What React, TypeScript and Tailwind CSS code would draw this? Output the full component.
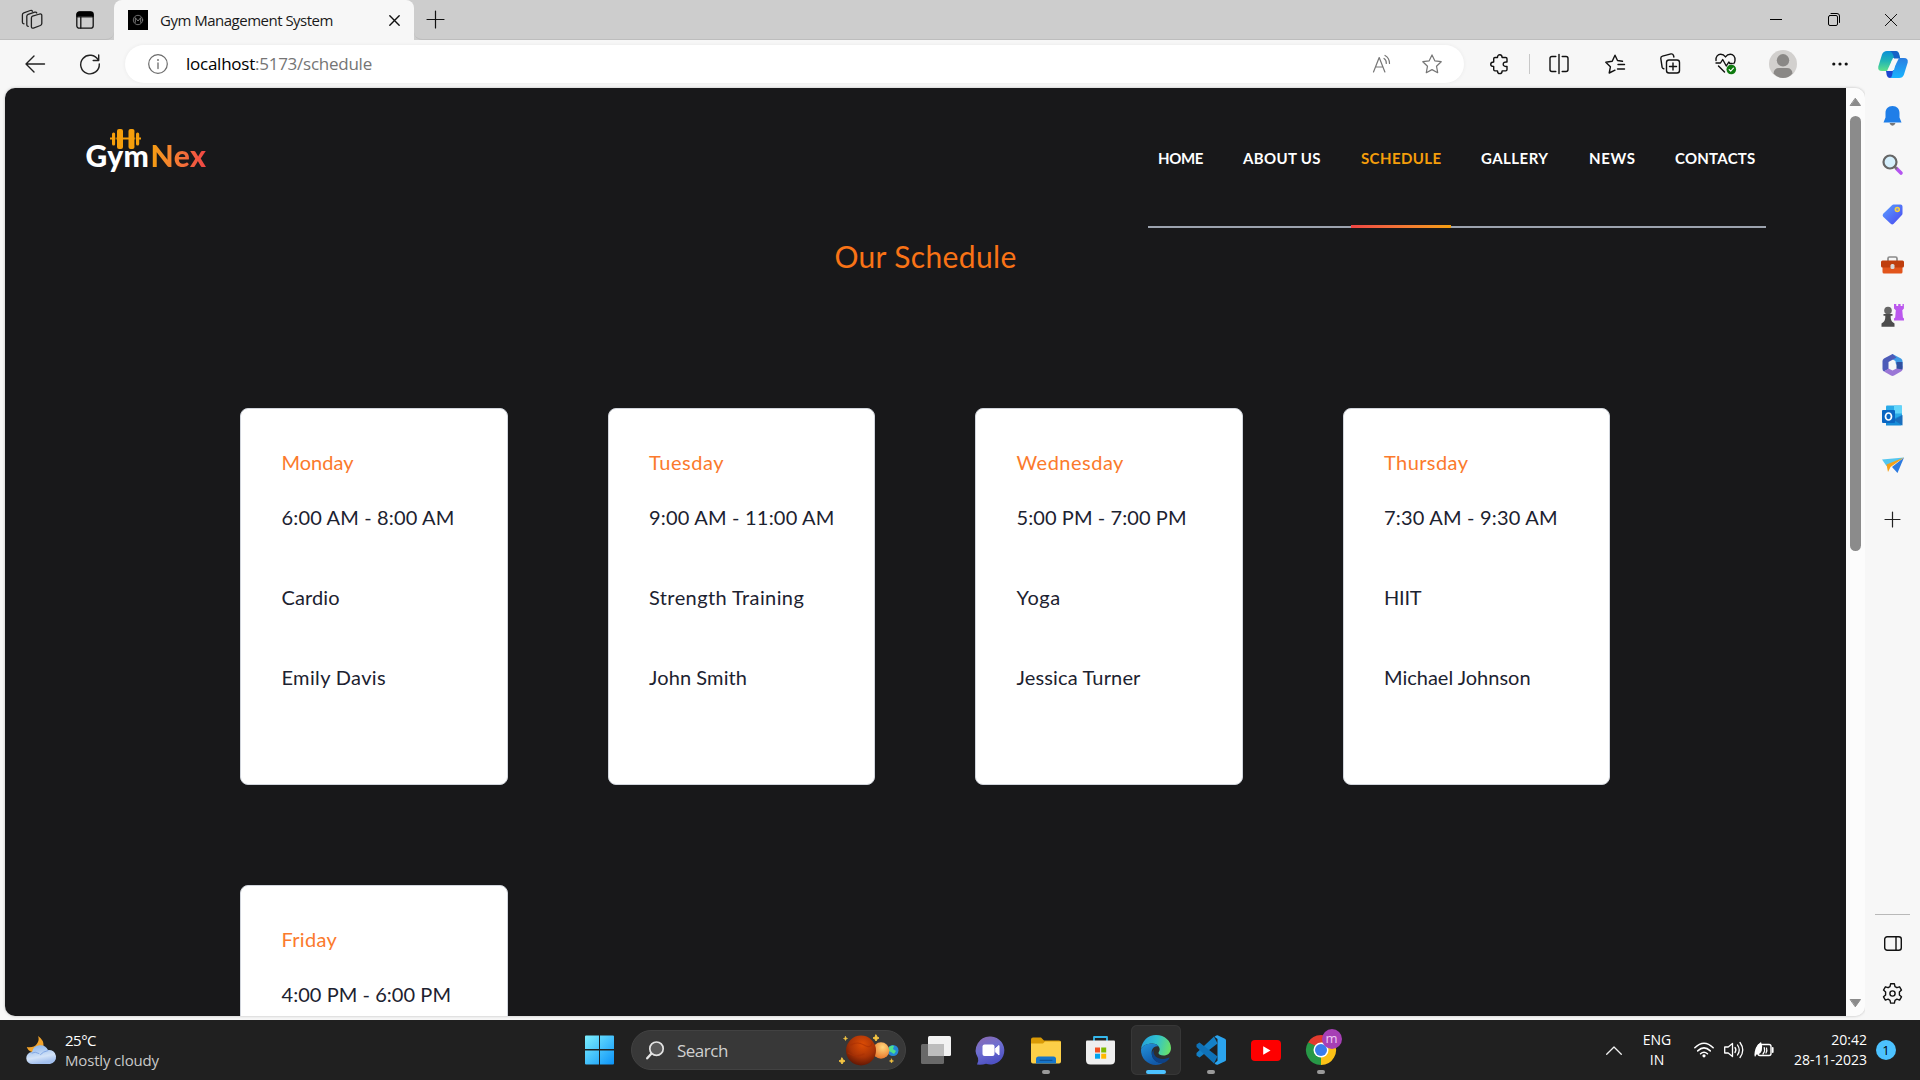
import type { ReactNode } from "react";

type IconProps = { w: number; h: number; children: ReactNode; className?: string };

function Icon({ w, h, children, className = "" }: IconProps) {
  return (
    <svg
      width={w}
      height={h}
      viewBox={`0 0 ${w} ${h}`}
      fill="none"
      strokeLinecap="round"
      strokeLinejoin="round"
      className={`shrink-0 overflow-visible ${className}`}
    >
      {children}
    </svg>
  );
}

function Cell({ className, children }: { className: string; children: ReactNode }) {
  return <div className={`flex shrink-0 items-center justify-center ${className}`}>{children}</div>;
}

/* ---------- Browser chrome ---------- */

function TabBar() {
  return (
    <div className="flex h-10 shrink-0 bg-[#cdcdcd]">
      <div className="flex w-[114px] items-center rounded-br-lg border-b border-[#bdbdbd]">
        <Cell className="ml-[12px] w-10">
          <Icon w={22} h={22}>
            <g stroke="#222" strokeWidth="1.3">
              <path d="M11.5 7.2l7.3-2.2c1.4-.3 2 .4 2 1.4v8.2c0 1-.5 1.6-1.4 1.9l-7 2.6c-1.1.4-2-.3-2-1.3V9c0-1 .3-1.5 1.1-1.8z" />
              <path d="M7.3 17.3c-1 0-1.5-.7-1.5-1.6V7.3c0-1 .5-1.6 1.4-1.9l6.5-2.2c1-.3 1.8 0 2.1.8" />
              <path d="M3 14.8c-1-.1-1.6-.7-1.6-1.6V5.700c0-1 .5-1.6 1.4-1.900L9.300 1.500c1-.3 1.800 0 2.200.7" />
            </g>
          </Icon>
        </Cell>
        <Cell className="ml-[13px] w-10">
          <Icon w={18} h={18}>
            <rect x="0.8" y="1" width="16.400" height="16.200" rx="2.500" stroke="#111" strokeWidth="1.300" />
            <path d="M1 5.500V3.500Q1 1 3.500 1h11Q17 1 17 3.500v2z" fill="#000" stroke="#000" />
            <path d="M4.800 6v11" stroke="#111" strokeWidth="1.300" />
          </Icon>
        </Cell>
      </div>
      <div className="flex w-[300px] items-center rounded-t-lg bg-[#f7f7f7] pl-[14px]">
        <Icon w={20} h={20}>
          <path d="M0 0h20v20H0z" fill="#000" />
          <circle cx="10" cy="10" r="4.700" stroke="#888" strokeWidth="0.800" />
          <path d="M7.300 12.300V7.700L10 11l2.700-3.300v4.600" stroke="#999" strokeWidth="0.800" />
        </Icon>
        <span className="mb-px ml-3 w-[206px] whitespace-nowrap font-['Open_Sans',sans-serif] text-[15px] leading-5 tracking-[-0.5px] text-[#1a1a1a]">
          Gym Management System
        </span>
        <Cell className="ml-[18px] w-5">
          <Icon w={11} h={11}>
            <path d="M0.800 0.800l9.400 9.400M10.200 0.800l-9.400 9.400" stroke="#111" strokeWidth="1.400" />
          </Icon>
        </Cell>
      </div>
      <div className="flex flex-1 items-center rounded-bl-lg border-b border-[#bdbdbd]">
        <Cell className="ml-[3px] w-[37px]">
          <Icon w={17} h={17}>
            <path d="M8.500 0v17M0 8.500h17" stroke="#111" strokeWidth="1.200" />
          </Icon>
        </Cell>
        <Cell className="ml-auto w-[58px]">
          <Icon w={12} h={12}>
            <path d="M0 5.500h12" stroke="#000" strokeLinecap="butt" />
          </Icon>
        </Cell>
        <Cell className="w-[57px]">
          <Icon w={12} h={13}>
            <rect x="0.500" y="2.500" width="9" height="10" rx="1.500" stroke="#000" />
            <path d="M3 0.500h6q2.500 0 2.500 2.500v6.500" stroke="#000" />
          </Icon>
        </Cell>
        <Cell className="w-[58px]">
          <Icon w={12} h={12}>
            <path d="M0.300 0.300l11.400 11.400M11.700 0.300l-11.400 11.400" stroke="#111" />
          </Icon>
        </Cell>
      </div>
    </div>
  );
}

function Toolbar() {
  return (
    <div className="flex h-12 shrink-0 items-center bg-[#f7f7f7] pb-px">
      <Cell className="ml-[10px] w-[50px]">
        <Icon w={20} h={18}>
          <path d="M19.500 9H1M9 1L1 9l8 8" stroke="#222" strokeWidth="1.400" />
        </Icon>
      </Cell>
      <Cell className="ml-[5px] w-[50px]">
        <Icon w={20} h={20}>
          <path d="M18.300 6.300A9.300 9.300 0 1 0 19.300 10" stroke="#222" strokeWidth="1.400" />
          <path d="M18.700 1v5.500h-5.500" stroke="#222" strokeWidth="1.400" />
        </Icon>
      </Cell>
      <div className="ml-[10px] flex h-[38px] w-[1339px] items-center rounded-full bg-white shadow-[0_0_4px_rgba(0,0,0,0.06)]">
        <Icon w={20} h={20} className="ml-[22.500px]">
          <circle cx="10" cy="10" r="9.300" stroke="#6b6b6b" strokeWidth="1.200" />
          <path d="M10 9v5.500" stroke="#6b6b6b" strokeWidth="1.300" />
          <circle cx="10" cy="6" r="0.900" fill="#6b6b6b" />
        </Icon>
        <span className="ml-[18.500px] whitespace-nowrap font-['Open_Sans',sans-serif] text-[17px] leading-6 tracking-[-0.25px] text-[#757575]">
          <span className="text-black">localhost</span>:5173/schedule
        </span>
        <Cell className="ml-auto w-[50px]">
          <Icon w={20} h={20}>
            <g stroke="#767676" strokeWidth="1.200">
              <path d="M1.500 18L7.200 3.500 12.900 18M3.500 13h7.400" />
              <path d="M12 4.500q2.500 1.500 2.300 5" />
              <path d="M13 1.500q4.500 2.500 4.500 8" />
            </g>
          </Icon>
        </Cell>
        <Cell className="mr-[7px] w-[50px]">
          <Icon w={20} h={20}>
            <path
              d="M10 0.900l2.800 5.900 6.400.9-4.700 4.500 1.200 6.500-5.700-3.100-5.700 3.100 1.200-6.500L.8 7.700l6.400-.9z"
              stroke="#767676"
              strokeWidth="1.200"
            />
          </Icon>
        </Cell>
      </div>
      <Cell className="ml-[11px] w-[50px]">
        <Icon w={20} h={20}>
          <path
            d="M5 3.500h2.500C7.500 1.500 8.500.7 9.800.7s2.300.8 2.300 2.800h3.600q1.300 0 1.300 1.300v3.200c-2.300-.3-3.800.6-3.800 2.200s1.500 2.500 3.800 2.200v3.200q0 1.300-1.300 1.300h-3.600c0 2-1 2.700-2.300 2.700s-2.300-.7-2.300-2.700H5q-1.300 0-1.300-1.300v-3.200C1.700 12.400.7 11.500.7 10.200S1.700 8 3.700 8V4.800Q3.700 3.500 5 3.500z"
            stroke="#111"
            strokeWidth="1.400"
          />
        </Icon>
      </Cell>
      <Cell className="-ml-px w-[10px]">
        <div className="h-5 w-px bg-[#c8c8c8]" />
      </Cell>
      <Cell className="w-[50px]">
        <Icon w={20} h={20}>
          <g stroke="#111" strokeWidth="1.400">
            <path d="M10 0.500v19" />
            <path d="M6.800 2.500H3q-2 0-2 2v11q0 2 2 2h3.800" />
            <path d="M13.200 2.500H17q2 0 2 2v11q0 2-2 2h-3.800" />
          </g>
        </Icon>
      </Cell>
      <Cell className="ml-[6px] w-[50px]">
        <Icon w={20} h={20}>
          <g stroke="#111" strokeWidth="1.400">
            <path d="M10 16.200L4.200 19l1.200-6.200L.8 8.200l6.400-.9L10 1.200l2.500 5.300 5 .8" />
            <path d="M13 10.500h6.500M12.500 15h7" />
          </g>
        </Icon>
      </Cell>
      <Cell className="ml-[5px] w-[50px]">
        <Icon w={20} h={21}>
          <g stroke="#111" strokeWidth="1.400">
            <rect x="6.500" y="7" width="13" height="13" rx="2.500" />
            <path d="M13 10v7M9.500 13.500h7" />
            <path d="M3.800 15.800q-1.300-.3-1.700-1.600L.8 5.500Q.7 3.700 2.500 3.200L11 .9q1.800-.3 2.400 1.300l.5 1.800" />
          </g>
        </Icon>
      </Cell>
      <Cell className="ml-[5px] w-[50px]">
        <Icon w={21} h={21}>
          <g stroke="#111" strokeWidth="1.400">
            <path d="M1 7.500C.5 3.500 3 1.200 5.700 1.200c2.200 0 3.600 1 4.800 2.700 1.200-1.700 2.600-2.700 4.800-2.700C18 1.200 20.500 3.500 20 7.500q-.2 2-1.200 3" />
            <path d="M3.500 13l6 6" />
            <path d="M1 10h4.500l2.200-3.500 3.600 6.500 2.500-4 1 1.500h2.500" />
          </g>
          <circle cx="16.300" cy="16.500" r="4.800" fill="#0f7b10" />
          <path d="M14.200 16.600l1.500 1.500 2.700-2.900" stroke="#fff" strokeWidth="1.200" />
        </Icon>
      </Cell>
      <Cell className="ml-[8px] w-[50px]">
        <Icon w={28} h={28}>
          <circle cx="14" cy="14" r="14" fill="#d2d0ce" />
          <circle cx="14" cy="10.300" r="6.200" fill="#8a8886" />
          <path d="M4.500 23.500Q5 18 10 18h8q5 0 5.500 5.500Q19.500 28 14 28t-9.500-4.500z" fill="#8a8886" />
        </Icon>
      </Cell>
      <Cell className="ml-[7px] w-[50px]">
        <Icon w={16} h={4}>
          <g fill="#111">
            <circle cx="1.800" cy="2" r="1.600" />
            <circle cx="8" cy="2" r="1.600" />
            <circle cx="14.200" cy="2" r="1.600" />
          </g>
        </Icon>
      </Cell>
      <Cell className="ml-[3px] w-[50px]">
        <Icon w={30} h={28}>
          <defs>
            <linearGradient id="copA" x1="0" y1="0" x2="0" y2="1">
              <stop offset="0" stopColor="#0a8fd8" />
              <stop offset="0.500" stopColor="#21b5b5" />
              <stop offset="1" stopColor="#5fe08a" />
            </linearGradient>
            <linearGradient id="copB" x1="0" y1="0" x2="0" y2="1">
              <stop offset="0" stopColor="#2b7de0" />
              <stop offset="1" stopColor="#18b4ff" />
            </linearGradient>
          </defs>
          <path d="M9 1h9q2.300 0 3 2.500l1 4.500h-7L9 21H4q-4.500 0-3.700-4.500L4 4.500Q5.300 1 9 1z" fill="url(#copA)" />
          <path d="M17 1q3.300 0 4 3l1.200 4.500H16Q15.500 3 12 1z" fill="#1663c7" />
          <path d="M21 8h5q4.500 0 3.700 4.500L26 24.500Q24.700 28 21 28h-8.500L15 20z" fill="url(#copB)" />
          <path d="M8 21h7l-1 4.500q-.7 2.500-2 2.500-2.500 0-3.300-3z" fill="#1b46d0" />
          <path d="M14 10h4.500L16 20h-4.500z" fill="#f7f7f7" />
        </Icon>
      </Cell>
    </div>
  );
}

function Sidebar() {
  return (
    <aside className="flex w-[55px] shrink-0 flex-col items-center bg-[#f7f7f7]">
      <Cell className="mt-[3px] h-[49px]">
        <Icon w={19} h={20}>
          <path d="M6.500 17h6q-1 2.800-3 2.800t-3-2.800z" fill="#777" />
          <path d="M9.500 0C5 0 2.500 3 2.500 7v4.500L.5 16.500h18l-2-5V7c0-4-2.500-7-7-7z" fill="#1f7ee8" />
        </Icon>
      </Cell>
      <Cell className="-mt-px h-[50px]">
        <Icon w={21} h={21}>
          <path d="M14.500 14.500l4.500 4.500" stroke="#b455f0" strokeWidth="3.600" />
          <path d="M12.800 12.800l1.500 1.500" stroke="#777" strokeWidth="2.400" />
          <circle cx="8" cy="8" r="6.500" fill="#d5effc" stroke="#666" strokeWidth="2.200" />
        </Icon>
      </Cell>
      <Cell className="h-[51px]">
        <Icon w={21} h={21}>
          <defs>
            <linearGradient id="tagFill" x1="0" y1="0" x2="1" y2="1">
              <stop offset="0" stopColor="#5aa2ff" />
              <stop offset="1" stopColor="#4a46f0" />
            </linearGradient>
          </defs>
          <path d="M11.500.5h7q2 0 2 2v7q0 1-.8 1.800l-8 8.500q-1.500 1.200-3 0l-7.500-7q-1.200-1.500 0-3L10 1.200q.7-.7 1.500-.7z" fill="url(#tagFill)" />
          <circle cx="15.300" cy="5.500" r="2" fill="#8b8fd0" stroke="#f6d33c" strokeWidth="1.500" />
        </Icon>
      </Cell>
      <Cell className="h-[50px]">
        <Icon w={23} h={18}>
          <path d="M7 5V2.500Q7 1 8.500 1h6Q16 1 16 2.500V5" stroke="#8a8a8a" strokeWidth="1.700" />
          <rect x="1.500" y="9" width="20" height="8.500" rx="1.500" fill="#e2551c" />
          <rect x="0" y="4.500" width="23" height="7" rx="1.500" fill="#bf3e0d" />
          <rect x="9.500" y="8" width="4" height="5" rx="1.500" fill="#d8d8d8" />
        </Icon>
      </Cell>
      <Cell className="h-[50px]">
        <Icon w={23} h={23}>
          <path d="M13 0h2.300v2h1.900V0h2.400v2h1.900V0h1.400v4.500l-1.600 1.700.6 7.300 1.100 1v2H13v-2l1.200-1 .6-7.300L13 4.500z" fill="#bb58ee" />
          <circle cx="7" cy="6.500" r="3.800" fill="#666" />
          <path d="M2.500 10h9v1.700H9.700q-.2 4.500 1.800 6.300l2 1.500v3.300H.5v-3.300l2-1.500q2-1.800 1.800-6.300H2.500z" fill="#4c4c4c" />
        </Icon>
      </Cell>
      <Cell className="h-[50px]">
        <Icon w={21} h={22}>
          <path d="M10.500 0L19 4.500q1.500 1 1.500 2.500v7l-7-4V7L8 4z" fill="#3f9be6" />
          <path d="M10.500 0L2 4.500Q.5 5.500.5 7v8q0 1.500 1.500 2.500l4.500-2.500V8l8-4.500z" fill="#4d5bb8" />
          <path d="M2 17.500l7 4q1.500.8 3 0l7-4q1.500-1 1.500-2.500v-3l-5-3v5l-5 2.500-4-2z" fill="#9a76d6" />
          <path d="M20.500 8v7.500l-6-1V8z" fill="#31509f" />
          <circle cx="10.500" cy="11" r="3.400" fill="#f7f7f7" />
        </Icon>
      </Cell>
      <Cell className="h-[50px]">
        <Icon w={21} h={21}>
          <rect x="4" y="0.500" width="16" height="19" rx="1" fill="#2aaae8" />
          <path d="M12 0.500h8v8h-8z" fill="#62d5fa" />
          <path d="M4 20.500V17l16-7v9.500q0 1-1 1z" fill="#168cd8" />
          <path d="M20.500 10v10.500L12 15z" fill="#1a6ebd" />
          <rect x="0" y="5" width="13" height="13" rx="1" fill="#0b66c2" />
          <ellipse cx="6.500" cy="11.500" rx="3" ry="3.500" stroke="#fff" strokeWidth="1.700" />
        </Icon>
      </Cell>
      <Cell className="h-[50px]">
        <Icon w={22} h={16}>
          <path d="M0 2.500L22 .5l-11 7L4.500 9z" fill="#54c6ef" />
          <path d="M22 .5L15.500 16l-5.500-6z" fill="#2c7ae0" />
          <path d="M4.500 7.500L22 .5 8.500 10 6 15z" fill="#f5a11a" />
        </Icon>
      </Cell>
      <Cell className="mt-[4px] h-[50px]">
        <Icon w={15} h={15}>
          <path d="M7.500 0v15M0 7.500h15" stroke="#222" strokeWidth="1.200" />
        </Icon>
      </Cell>
      <div className="mt-auto h-px w-[35px] bg-[#b9b9b9]" />
      <Cell className="mt-[3px] h-[50px]">
        <Icon w={18} h={15}>
          <rect x="0.700" y="0.700" width="16.600" height="13.600" rx="2.500" stroke="#111" strokeWidth="1.400" />
          <path d="M12 1v13" stroke="#111" strokeWidth="1.400" />
        </Icon>
      </Cell>
      <Cell className="mb-[2px] h-[50px]">
        <Icon w={21} h={21}>
          <path
            d="M8.600.8h3.800l.6 2.800 1.900 1.100 2.700-.9 1.900 3.300-2.100 1.900v2.900l2.100 1.900-1.900 3.300-2.700-.9-1.900 1.100-.6 2.800H8.600L8 17.300l-1.900-1.100-2.700.9-1.900-3.300 2.100-1.900V9L1.500 7.100l1.900-3.300 2.700.9L8 3.600z"
            stroke="#111"
            strokeWidth="1.400"
          />
          <circle cx="10.500" cy="10.500" r="2.600" stroke="#111" strokeWidth="1.400" />
        </Icon>
      </Cell>
    </aside>
  );
}

function Scrollbar() {
  return (
    <div className="flex w-[19px] shrink-0 flex-col items-center bg-[#fcfcfc]">
      <Icon w={11} h={8} className="mt-[10px]">
        <path d="M5.500 0.500L10.500 7.500H0.500z" fill="#8b8b8b" stroke="#8b8b8b" />
      </Icon>
      <div className="mt-[10px] h-[435px] w-[11px] rounded-full bg-[#8b8b8b]" />
      <Icon w={11} h={8} className="mb-[9px] mt-auto">
        <path d="M5.500 7.500L10.500 0.500H0.500z" fill="#8b8b8b" stroke="#8b8b8b" />
      </Icon>
    </div>
  );
}

/* ---------- GymNex page ---------- */

const navItems = [
  { label: "HOME", style: "w-[65px] tracking-[-0.4px]" },
  { label: "ABOUT US", style: "w-[98px] tracking-[0.35px]" },
  { label: "SCHEDULE", style: "w-[100px] tracking-[0.39px]", active: true },
  { label: "GALLERY", style: "w-[88px] tracking-[0.45px]" },
  { label: "NEWS", style: "w-[66px] tracking-[0.6px]" },
  { label: "CONTACTS", style: "w-[101px] tracking-[0.25px]" },
];

type Line = { text: string; style: string };

const sessions: { day: Line; details: Line[] }[] = [
  {
    day: { text: "Monday", style: "" },
    details: [
      { text: "6:00 AM - 8:00 AM", style: "tracking-[0.15px]" },
      { text: "Cardio", style: "tracking-[0.1px]" },
      { text: "Emily Davis", style: "tracking-[0.35px]" },
    ],
  },
  {
    day: { text: "Tuesday", style: "tracking-[0.55px]" },
    details: [
      { text: "9:00 AM - 11:00 AM", style: "tracking-[0.2px]" },
      { text: "Strength Training", style: "tracking-[0.4px]" },
      { text: "John Smith", style: "tracking-[0.1px]" },
    ],
  },
  {
    day: { text: "Wednesday", style: "tracking-[0.5px]" },
    details: [
      { text: "5:00 PM - 7:00 PM", style: "tracking-[0.08px]" },
      { text: "Yoga", style: "tracking-[0.6px]" },
      { text: "Jessica Turner", style: "tracking-[0.15px]" },
    ],
  },
  {
    day: { text: "Thursday", style: "tracking-[0.42px]" },
    details: [
      { text: "7:30 AM - 9:30 AM", style: "tracking-[0.2px]" },
      { text: "HIIT", style: "tracking-[-0.2px]" },
      { text: "Michael Johnson", style: "" },
    ],
  },
  {
    day: { text: "Friday", style: "tracking-[0.3px]" },
    details: [{ text: "4:00 PM - 6:00 PM", style: "tracking-[0.05px]" }],
  },
];

function Logo() {
  return (
    <div className="ml-[80.500px] mt-[41px] flex flex-col">
      <Icon w={31} h={20} className="-mb-[9px] ml-[24.500px]">
        <g fill="#f59e0b">
          <rect x="0" y="8.500" width="31" height="2" />
          <rect x="2" y="3.500" width="3.200" height="13" rx="1.500" />
          <rect x="7" y="0" width="6" height="20" rx="2" />
          <rect x="18.500" y="0" width="6" height="20" rx="2" />
          <rect x="26" y="3.500" width="3.200" height="13" rx="1.500" />
        </g>
        <path d="M5.900 3v14M25.300 3v14" stroke="#18181a" strokeWidth="0.900" />
      </Icon>
      <div className="relative flex text-[30px] font-black leading-[30px] text-white">
        <span className="w-[65px] tracking-[0.4px]">Gym</span>
        <span className="bg-gradient-to-r from-[#f59e0b] to-[#ef4444] bg-clip-text tracking-[0.4px] text-transparent">Nex</span>
      </div>
    </div>
  );
}

function Header() {
  return (
    <header className="flex h-[140px] shrink-0">
      <Logo />
      <nav className="ml-auto mr-[80px] flex gap-5 self-end border-b-2 border-[#9ca3af]">
        {navItems.map((item) => (
          <a
            key={item.label}
            className={`relative h-[78px] whitespace-nowrap pl-[10px] text-[15px] font-bold leading-[21px] ${item.style} ${
              item.active ? "text-[#f59e0b]" : "text-white"
            }`}
          >
            {item.label}
            {item.active && (
              <span className="absolute -bottom-[2px] left-0 h-[3px] w-full bg-gradient-to-r from-[#ef4444] to-[#f59e0b]" />
            )}
          </a>
        ))}
      </nav>
    </header>
  );
}

function Page() {
  return (
    <main className="flex h-[928px] min-w-0 flex-1 flex-col overflow-hidden bg-[#18181a] font-['Lato',sans-serif]">
      <Header />
      <h1 className="mt-[10px] shrink-0 text-center text-[30px] leading-9 tracking-[0.35px] text-[#f97316]">Our Schedule</h1>
      <div className="ml-[235px] mt-[134px] grid shrink-0 grid-cols-[repeat(4,267.500px)] gap-[100px]">
        {sessions.map(({ day, details }) => (
          <article
            key={day.text}
            className="h-[377px] whitespace-nowrap rounded-lg border border-gray-300 bg-white pl-[40.500px] pt-[39px] text-[20px] leading-7 text-[#1c2230]"
          >
            <h2 className={`mb-[27px] text-[#fb7a2c] ${day.style}`}>{day.text}</h2>
            <div className="flex flex-col gap-[52px]">
              {details.map((line) => (
                <p key={line.text} className={line.style}>
                  {line.text}
                </p>
              ))}
            </div>
          </article>
        ))}
      </div>
    </main>
  );
}

/* ---------- Taskbar ---------- */

function SearchBox() {
  return (
    <div className="ml-[16px] flex h-10 w-[275px] shrink-0 items-center rounded-full border border-[#424242] bg-[#383838]">
      <Icon w={18} h={19} className="ml-[14px]">
        <path d="M5.500 12.500L1.200 17.300" stroke="#e4e4e4" strokeWidth="2.400" />
        <circle cx="10.500" cy="7.700" r="6.700" fill="#5a5a5a" stroke="#e4e4e4" strokeWidth="1.700" />
      </Icon>
      <span className="ml-[13px] mt-px text-[17px] tracking-[-0.5px] text-[#d0d0d0]">Search</span>
      <Icon w={60} h={32} className="ml-auto mr-[6px]">
        <defs>
          <radialGradient id="mars" cx="0.550" cy="0.300" r="0.700">
            <stop offset="0" stopColor="#dd4d05" />
            <stop offset="0.600" stopColor="#a93306" />
            <stop offset="1" stopColor="#641804" />
          </radialGradient>
          <radialGradient id="venus" cx="0.600" cy="0.300" r="0.700">
            <stop offset="0" stopColor="#ffd67c" />
            <stop offset="1" stopColor="#e9782c" />
          </radialGradient>
        </defs>
        <circle cx="54" cy="16.500" r="5.500" fill="#2487d8" />
        <path d="M50 13q3-2.500 5-1l-1 3 3 2-2 3-3-2-3-1z" fill="#4fe08c" />
        <circle cx="42" cy="16.500" r="8.300" fill="url(#venus)" />
        <circle cx="22" cy="16.500" r="15" fill="url(#mars)" />
        <path d="M12 11q6-4 13 0t8-2M9 19q8 5 16 1" stroke="#a82f05" strokeWidth="1.200" opacity="0.600" />
        <g fill="#f5c542">
          <path d="M3 24l1 2 2 1-2 1-1 2-1-2-2-1 2-1z" stroke="#f5c542" />
          <path d="M37 1l1 2 2 1-2 1-1 2-1-2-2-1 2-1z" stroke="#f5c542" />
          <path d="M6.500 2.500l.6 1.400 1.400.6-1.400.6-.6 1.400-.6-1.400-1.400-.6 1.400-.6z" stroke="#f5c542" strokeWidth="0.600" />
          <path d="M52.500 25l.6 1.400 1.400.6-1.400.6-.6 1.400-.6-1.400-1.400-.6 1.400-.6z" stroke="#f5c542" strokeWidth="0.600" />
        </g>
      </Icon>
    </div>
  );
}

function AppButton({ children, state = "closed" }: { children: ReactNode; state?: "closed" | "running" | "active" }) {
  return (
    <div className="flex w-[55px] shrink-0 justify-center">
      <div
        className={`relative flex h-[50px] w-[50px] items-center justify-center rounded-md ${
          state === "active" ? "bg-[#2e2e2e] ring-1 ring-inset ring-[#373737]" : ""
        }`}
      >
        {children}
        {state === "running" && <span className="absolute bottom-[1px] left-[21px] h-1 w-2 rounded-full bg-[#9a9a9a]" />}
        {state === "active" && <span className="absolute bottom-[1px] left-[15px] h-1 w-5 rounded-full bg-[#4cc2ff]" />}
      </div>
    </div>
  );
}

function Taskbar() {
  return (
    <footer className="flex h-[60px] shrink-0 items-center bg-[#202020] font-['Open_Sans',sans-serif] text-white">
      <div className="flex w-[585px] shrink-0 items-center">
        <Icon w={31} h={30} className="ml-[25.500px]">
          <defs>
            <linearGradient id="cloud" x1="0" y1="0" x2="0.300" y2="1">
              <stop offset="0" stopColor="#82aee8" />
              <stop offset="0.700" stopColor="#d3e3f8" />
              <stop offset="1" stopColor="#a3c0ee" />
            </linearGradient>
          </defs>
          <path d="M12 1q6 4 5.500 10T6 17Q2 16 .8 12q7 1 10-3t1.200-8z" fill="#f2a32a" />
          <path d="M6.500 29a6 6 0 0 1-.5-12 8.500 8.500 0 0 1 16-2A7 7 0 1 1 24 29z" fill="url(#cloud)" />
          <path d="M6 18q3-2 7 .5M22 15.500q-5 1-7.500 4" stroke="#7aa2e2" strokeWidth="0.900" />
        </Icon>
        <div className="ml-[8.500px] whitespace-nowrap text-[15px] leading-5">
          <div className="tracking-[-0.5px]">25°C</div>
          <div className="tracking-[-0.17px] text-[#c9c9c9]">Mostly cloudy</div>
        </div>
      </div>

      <Icon w={30} h={30}>
        <defs>
          <linearGradient id="win" x1="0" y1="0" x2="1" y2="1">
            <stop offset="0" stopColor="#7df0ff" />
            <stop offset="1" stopColor="#0c93f8" />
          </linearGradient>
        </defs>
        <path
          d="M1 .5h13V14H0V1.500Q0 .5 1 .5zM15 .5h13q1 0 1 1V14H15zM0 15.500h14V29.500H1q-1 0-1-1zM15 15.500h14v13q0 1-1 1H15z"
          fill="url(#win)"
        />
      </Icon>
      <SearchBox />

      <div className="ml-[2px] flex">
        <AppButton>
          <Icon w={30} h={28}>
            <rect x="7" y="0" width="23" height="20" rx="1.500" fill="#f2f2f2" />
            <rect x="0" y="8" width="23" height="20" rx="1.500" fill="#696969" />
            <path d="M7 8h16v12H7z" fill="#bdbdbd" />
          </Icon>
        </AppButton>
        <AppButton>
          <Icon w={29} h={29}>
            <defs>
              <linearGradient id="chat" x1="0" y1="0" x2="0.400" y2="1">
                <stop offset="0" stopColor="#8d69ad" />
                <stop offset="0.500" stopColor="#6f6fd0" />
                <stop offset="1" stopColor="#4f52c4" />
              </linearGradient>
            </defs>
            <path d="M15 .5a14 14 0 1 1-5 27.300Q6 29 1 28.500q2-3 1-6.500A14 14 0 0 1 15 .5z" fill="url(#chat)" />
            <rect x="6.500" y="8.500" width="12" height="11.500" rx="2" fill="#fff" />
            <path d="M19.500 12.500l3.500-3v9.500l-3.500-3z" fill="#fff" stroke="#fff" />
          </Icon>
        </AppButton>
        <AppButton state="running">
          <Icon w={30} h={27}>
            <path d="M0 2.500Q0 .5 2 .5h8l3 3h15q2 0 2 2V9H0z" fill="#d99a06" />
            <path d="M0 6.500h12l2-2h16v20q0 2-2 2H2q-2 0-2-2z" fill="#fccf48" />
            <path d="M5 26.500V22q0-2.500 2.500-2.500h15Q25 19.500 25 22v4.500z" fill="#1675c9" />
            <path d="M9 23.300h12" stroke="#0d4c8c" />
          </Icon>
        </AppButton>
        <AppButton>
          <Icon w={29} h={29}>
            <path d="M8 5V1h13v4" stroke="#35b8ec" strokeWidth="1.800" />
            <path d="M1 4.500h27q1 0 1 1V24q0 4.500-4.500 4.500h-20Q0 28.500 0 24V5.500q0-1 1-1z" fill="#efefef" />
            <path d="M9 11.500h5v5H9z" fill="#f25022" />
            <path d="M15.200 11.500h5v5h-5z" fill="#7fba00" />
            <path d="M9 17.700h5v5H9z" fill="#00a4ef" />
            <path d="M15.200 17.700h5v5h-5z" fill="#ffb900" />
          </Icon>
        </AppButton>
        <AppButton state="active">
          <Icon w={30} h={30}>
            <defs>
              <linearGradient id="edgeTop" x1="0" y1="0.300" x2="1" y2="0.500">
                <stop offset="0" stopColor="#249fdc" />
                <stop offset="0.500" stopColor="#30c2cf" />
                <stop offset="1" stopColor="#68e06a" />
              </linearGradient>
              <linearGradient id="edgeBlue" x1="0" y1="0" x2="0.500" y2="1">
                <stop offset="0" stopColor="#2394dc" />
                <stop offset="1" stopColor="#1158a8" />
              </linearGradient>
            </defs>
            <path d="M0 14.500C.7 6 7 0 15 0c9 0 15 6 15 13 0 5-3.500 7.500-7.500 7.500-3 0-5-1-5-2.500 0-1 1.200-1.500 1.200-3.700 0-3-3-5.800-7.200-5.800C6 8.500 1.500 10.500 0 14.500z" fill="url(#edgeTop)" />
            <path d="M0 14.500C1.500 10.500 6 8.500 10.500 8.500c3.500 0 6 1 7.300 3-5-1.300-8 3-7 8 1 5.500 5.500 9 11.500 8.300C19.500 29.500 17 30 15 30 6.500 30-.5 23 0 14.500z" fill="url(#edgeBlue)" />
            <path d="M12.800 14.500c-1.500 6 4 10 9.700 9.500 2.500-.2 4.300-1 5.500-1.500q.8 0 .3.900c-1.800 2.600-4 4-6.300 4.700-6 .5-10.200-3-11.200-8.300q-.3-3 2-5.300z" fill="#0d4288" />
          </Icon>
        </AppButton>
        <AppButton state="running">
          <Icon w={30} h={30}>
            <path d="M21.500 8.500L3.500 22.500 0.500 20.500V18L18 1.500z" fill="#1480c6" />
            <path d="M21.500 21.500L3.500 7.500.5 9.500V12L18 28.500z" fill="#0f72b8" />
            <path d="M21.500.3l7.500 3.500q1 .5 1 1.500v19.400q0 1-1 1.500l-7.500 3.500q-1.500.2-3-1.500l3-2.500V4l-3-2.200Q20 .1 21.500.3z" fill="#2ba4ee" />
          </Icon>
        </AppButton>
        <AppButton>
          <Icon w={30} h={21}>
            <rect width="30" height="21" rx="4" fill="#fe0000" />
            <path d="M12.200 6.300v8.400l7.300-4.200z" fill="#fff" />
          </Icon>
        </AppButton>
        <AppButton state="running">
          <Icon w={30} h={30}>
            <path d="M15 15L2 7.500A15 15 0 0 1 28 7.500z" fill="#e33b2e" />
            <path d="M15 15L2 7.500A15 15 0 0 0 15 30l6.500-11.300z" fill="#279847" />
            <path d="M15 15L15 30A15 15 0 0 0 28 7.500H15z" fill="#fbc116" />
            <path d="M2 7.500l6.500 11.300 6-6z" fill="#279847" />
            <path d="M15 30l6.500-11.300-5-3z" fill="#fbc116" />
            <circle cx="15" cy="15" r="7.500" fill="#fff" />
            <circle cx="15" cy="15" r="6" fill="#3a7cec" />
          </Icon>
          <span className="absolute left-[26px] top-[4px] flex h-5 w-5 items-center justify-center rounded-full bg-[#a63fb5] pb-px text-[13px] leading-none text-[#f0c9f5]">
            m
          </span>
        </AppButton>
      </div>

      <div className="ml-auto flex items-center text-[14px] leading-5">
        <Icon w={16} h={9}>
          <path d="M0.700 8.300L8 1l7.300 7.300" stroke="#f0f0f0" strokeWidth="1.300" />
        </Icon>
        <div className="ml-[15px] w-10 text-center">
          <div>ENG</div>
          <div>IN</div>
        </div>
        <Icon w={20} h={16} className="ml-[17px]">
          <g stroke="#fff" strokeWidth="1.500">
            <path d="M0.800 5.800Q10-3.500 19.200 5.800" />
            <path d="M3.700 8.900q6.300-6 12.600 0" />
            <path d="M6.500 11.700q3.500-3 7 0" />
          </g>
          <circle cx="10" cy="13.800" r="1.600" fill="#fff" />
        </Icon>
        <Icon w={20} h={18} className="ml-[10px]">
          <g stroke="#fff" strokeWidth="1.300">
            <path d="M0.700 6v6h3.500l4.300 3.500v-13L4.200 6z" />
            <path d="M11 6.500q1.800 2.500 0 5M13.500 4q3.500 5 0 10M16 1.500q5.500 7.500 0 15" />
          </g>
        </Icon>
        <Icon w={20} h={16} className="ml-[10px]">
          <rect x="4" y="2.500" width="13" height="11" rx="2" stroke="#fff" strokeWidth="1.400" />
          <path d="M18.700 6v4" stroke="#fff" strokeWidth="1.800" />
          <path d="M7 0q2 4 .8 8.500Q6.500 12.500 2.500 12.500L1 15q-1-2-.3-5Q1.500 4 7 0z" fill="#fff" />
          <path d="M9 12q2.500-3 1.200-6.500M12 11q1.500-2.500.5-5" stroke="#fff" strokeWidth="1.200" />
        </Icon>
        <div className="w-[93px] whitespace-nowrap text-right">
          <div>20:42</div>
          <div>28-11-2023</div>
        </div>
        <div className="ml-[9px] mr-[24px] flex h-5 w-5 items-center justify-center rounded-full bg-[#4cc2ff] text-[13px] leading-none text-black">
          1
        </div>
      </div>
    </footer>
  );
}

export default function App() {
  return (
    <div className="flex h-[1080px] w-[1920px] flex-col overflow-hidden bg-[#f7f7f7]">
      <TabBar />
      <Toolbar />
      <div className="flex h-[932px] shrink-0">
        <div className="ml-[5px] flex h-[928px] w-[1860px] overflow-hidden rounded-[10px] shadow-[0_0_3px_rgba(0,0,0,0.25)]">
          <Page />
          <Scrollbar />
        </div>
        <Sidebar />
      </div>
      <Taskbar />
    </div>
  );
}
